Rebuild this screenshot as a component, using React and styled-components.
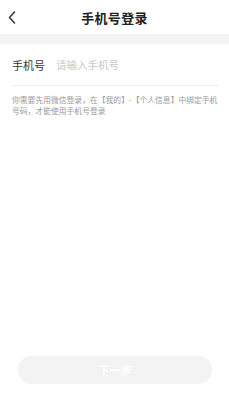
import styled, { createGlobalStyle } from "styled-components";

const GlobalStyle = createGlobalStyle`
  html, body {
    margin: 0;
    padding: 0;
    background: #fff;
    font-family: "Noto Sans CJK SC", "Noto Sans", sans-serif;
  }
  * { box-sizing: border-box; }
`;

const Page = styled.div`
  width: 229px;
  height: 400px;
  display: flex;
  flex-direction: column;
  background: #fff;
`;

const NavBar = styled.div`
  position: relative;
  height: 34px;
  display: flex;
  align-items: center;
  justify-content: center;
`;

const BackBtn = styled.button`
  position: absolute;
  left: 6px;
  top: 9px;
  width: 12px;
  height: 16px;
  padding: 0;
  border: none;
  background: none;
  display: flex;
  align-items: center;
  justify-content: center;
`;

const Title = styled.h1`
  margin: 0;
  font-size: 13px;
  font-weight: 700;
  color: #222;
  letter-spacing: 0.3px;
`;

const Gap = styled.div`
  height: 10px;
  background: #f4f4f4;
`;

const Form = styled.div`
  padding: 0 10px 0 12px;
  display: flex;
  flex-direction: column;
`;

const Row = styled.label`
  height: 42px;
  display: flex;
  align-items: center;
  border-bottom: 1px solid #efefef;
`;

const Label = styled.span`
  width: 44px;
  font-size: 11px;
  color: #333;
`;

const Input = styled.input`
  flex: 1;
  border: none;
  outline: none;
  padding: 0;
  font-family: inherit;
  font-size: 10.5px;
  color: #333;
  background: transparent;
  &::placeholder {
    color: #c8c8c8;
  }
`;

const Note = styled.p`
  margin: 9px 0 0;
  width: 210px;
  font-size: 7.8px;
  line-height: 10.5px;
  color: #9a9a9a;
`;

const Spacer = styled.div`
  flex: 1;
`;

const Footer = styled.div`
  padding: 0 17px 16px 18px;
`;

const NextBtn = styled.button`
  width: 100%;
  height: 28px;
  border: none;
  border-radius: 14px;
  background: #f3f3f3;
  color: #fff;
  font-family: inherit;
  font-size: 11px;
  font-weight: 700;
`;

export default function App() {
  return (
    <>
      <GlobalStyle />
      <Page>
        <NavBar>
          <BackBtn aria-label="返回">
            <svg width="8" height="13" viewBox="0 0 8 13" fill="none">
              <path d="M6.5 1L1.5 6.5L6.5 12" stroke="#333" strokeWidth="1.5" strokeLinecap="round" strokeLinejoin="round" />
            </svg>
          </BackBtn>
          <Title>手机号登录</Title>
        </NavBar>
        <Gap />
        <Form>
          <Row>
            <Label>手机号</Label>
            <Input type="tel" placeholder="请输入手机号" />
          </Row>
          <Note>你需要先用微信登录，在【我的】-【个人信息】中绑定手机号码，才能使用手机号登录</Note>
        </Form>
        <Spacer />
        <Footer>
          <NextBtn disabled>下一步</NextBtn>
        </Footer>
      </Page>
    </>
  );
}
